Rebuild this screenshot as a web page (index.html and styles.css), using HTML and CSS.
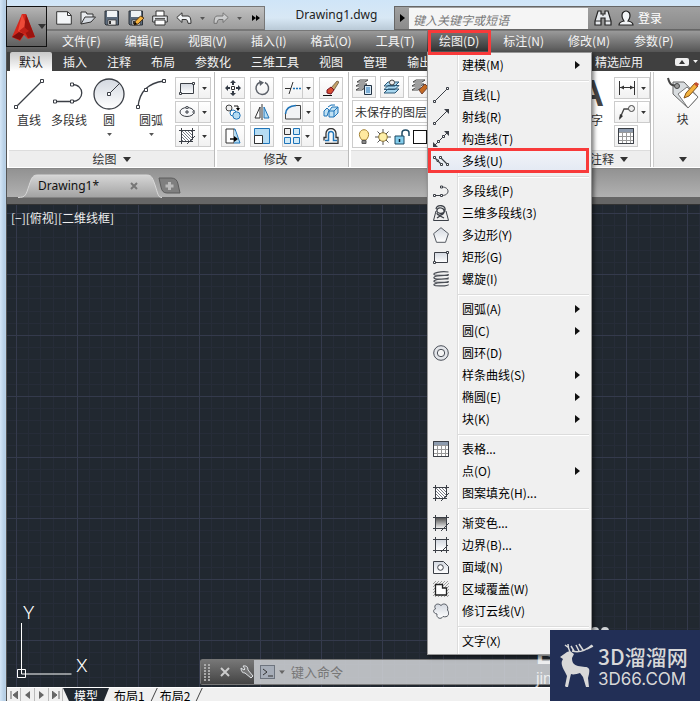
FILE: index.html
```html
<!DOCTYPE html>
<html lang="zh-CN">
<head>
<meta charset="utf-8">
<title>Drawing1.dwg</title>
<link rel="stylesheet" href="styles.css">
</head>
<body>
<svg class="defs" aria-hidden="true">
  <defs>
    <linearGradient id="shade" x1="0" y1="0" x2="0" y2="1"><stop offset="0" stop-color="#d3d8e0"/><stop offset="1" stop-color="#fff"/></linearGradient>
    <linearGradient id="dark" x1="0" y1="0" x2="0" y2="1"><stop offset="0" stop-color="#555"/><stop offset="1" stop-color="#eee"/></linearGradient>
    <pattern id="hatch" width="3" height="3" patternUnits="userSpaceOnUse"><path d="M0 0l3 3" stroke="#555b66" stroke-width=".8"/></pattern>
    <pattern id="hatch2" width="3" height="3" patternUnits="userSpaceOnUse"><path d="M0 3l3-3" stroke="#666" stroke-width=".6"/></pattern>
  </defs>
  <symbol id="i-line" viewBox="0 0 16 16"><path d="M2 14L14 2" stroke="#3b3f46"/><path d="M.5 13.5h2v2h-2zM13.500 .5h2v2h-2z" fill="#fff" stroke="#3b3f46"/></symbol>
  <symbol id="i-ray" viewBox="0 0 16 16"><path d="M2 14L14 2" stroke="#3b3f46"/><path d="M.5 13.500h2v2h-2z" fill="#fff" stroke="#3b3f46"/><path d="M16 0v5l-5-5z" fill="#3b3f46"/></symbol>
  <symbol id="i-xline" viewBox="0 0 16 16"><path d="M2 14L14 2" stroke="#3b3f46"/><path d="M4.500 9.500h2v2h-2zM9.500 4.500h2v2h-2z" fill="#fff" stroke="#3b3f46"/><path d="M16 0v5l-5-5zM0 16v-5l5 5z" fill="#3b3f46"/></symbol>
  <symbol id="i-mline" viewBox="0 0 16 16"><path d="M2 5l7 7M8 5l7 7" stroke="#3b3f46" stroke-width="1.200"/><path d="M.5 3.500h2v2h-2zM6.500 3.500h2v2h-2zM7.500 10.500h2v2h-2zM13.500 10.500h2v2h-2zM4 7h1.500v1.500H4z" fill="#fff" stroke="#3b3f46"/></symbol>
  <symbol id="i-pline" viewBox="0 0 16 16"><path d="M2 12.500h7c8 0 8-8.500 0-8.500" fill="none" stroke="#3b3f46"/><path d="M.5 11.500h2v2h-2zM7.500 11.500h2v2h-2zM7.500 3h2v2h-2z" fill="#fff" stroke="#3b3f46"/></symbol>
  <symbol id="i-3dpoly" viewBox="0 0 16 16"><path d="M3 6L.5 15.500h15L13 6" fill="#eee" stroke="#3b3f46"/><path d="M3 4c1-5 10-4 9 1s-9 4-8 0 8-2 7 2-7 4-7 1M4 13l3-2 4 2" fill="none" stroke="#3b3f46" stroke-width="1.300"/></symbol>
  <symbol id="i-polygon" viewBox="0 0 16 16"><path d="M8 .7l7.400 6-2.900 8.600H3.500L.6 6.700z" fill="url(#shade)" stroke="#555a62"/></symbol>
  <symbol id="i-rect" viewBox="0 0 16 16"><path d="M1.500 3.500h13v10h-13z" fill="url(#shade)" stroke="#3b3f46"/><path d="M.5 12.500h2v2h-2zM13.500 2.500h2v2h-2z" fill="#fff" stroke="#3b3f46"/></symbol>
  <symbol id="i-helix" viewBox="0 0 16 16"><path d="M15.500 1C7 0 0 2 1 3.500s14.500 1 14.500-.5M15.500 4.500C7 4 0 5 1 7s14.500 1 14.500-.5M15.500 8C7 7.500 0 9 1 10.500s14.500 1 14.500-.5M15.500 11.500C7 11 0 12.500 1 14s14.500 1 14.500-.5" fill="none" stroke="#4a4e55" stroke-width="1.200"/></symbol>
  <symbol id="i-donut" viewBox="0 0 16 16"><circle cx="8" cy="8" r="7.300" fill="#e4e6ea" stroke="#4a4f58"/><circle cx="8" cy="8" r="3.700" fill="#f4f4f4" stroke="#4a4f58"/></symbol>
  <symbol id="i-table" viewBox="0 0 16 16"><path d="M.5.5h15v15H.5z" fill="#fff" stroke="#3b3f46"/><path d="M1 1h14v3H1z" fill="#8d9bae"/><path d="M1 4.500h14M1 8.500h14M1 12.500h14M4.500 4v11M8.500 4v11M12.500 4v11" stroke="#999"/><path d="M.5.5h15v15H.5z" fill="none" stroke="#3b3f46"/></symbol>
  <symbol id="i-hatch" viewBox="0 0 16 16"><path d="M3 3h10v10H3z" fill="#fff"/><path d="M3 3h10v10H3z" fill="url(#hatch)"/><path d="M0 2.500h16M0 13.500h14M2.500 0v16M13.500 0v12M8 16l8-8" stroke="#3b3f46" fill="none"/></symbol>
  <symbol id="i-grad" viewBox="0 0 16 16"><path d="M3 3h10v10H3z" fill="url(#dark)"/><path d="M0 2.500h16M0 13.500h14M2.500 0v16M13.500 0v16M8 16l8-8" stroke="#3b3f46" fill="none"/></symbol>
  <symbol id="i-bound" viewBox="0 0 16 16"><path d="M3 3h10v10H3z" fill="url(#shade)"/><path d="M0 2.500h16M0 13.500h16M2.500 0v16M13.500 0v16M8 15l7-7" stroke="#3b3f46" fill="none"/></symbol>
  <symbol id="i-region" viewBox="0 0 16 16"><path d="M.5 2.500h10l5 5v7H.5z" fill="url(#shade)" stroke="#3b3f46"/><circle cx="7.500" cy="8.500" r="2.800" fill="#fff" stroke="#3b3f46"/></symbol>
  <symbol id="i-wipe" viewBox="0 0 16 16"><path d="M0 0h16v16H0z" fill="url(#hatch2)"/><path d="M2.500 3.500h7v3.500h4v7h-11z" fill="#fff" stroke="#222" stroke-width="1.300"/></symbol>
  <symbol id="i-cloud" viewBox="0 0 16 16"><path d="M8 2.500c3-3.500 8-.5 6.500 4.500 3 4 0 8-4.500 6.500-2 3.500-7 1.500-6-2.500C-1 10 .5 6 2.500 6 0 1.500 5-.5 8 2.500z" fill="url(#shade)" stroke="#555a62"/></symbol>
  <symbol id="i-ellipse" viewBox="0 0 16 16"><ellipse cx="8" cy="8" rx="7" ry="4.500" fill="#f7f8fa" stroke="#3b3f46"/><path d="M6 8h4M8 6v4" stroke="#3b3f46"/><path d="M7 2.500h2v2H7zM14 7h2v2h-2z" fill="#fff" stroke="#3b3f46" stroke-width=".8"/></symbol>

  <symbol id="i-move" viewBox="0 0 16 16"><path d="M6.500 6.500h3v3h-3z" fill="#fff" stroke="#333"/><path d="M8 0l3 3H9v2H7V3H5zM8 16l3-3H9v-2H7v2H5zM0 8l3-3v2h2v2H3v2zM16 8l-3-3v2h-2v2h2v2z" fill="#333a44"/></symbol>
  <symbol id="i-rotate" viewBox="0 0 16 16"><path d="M6 2.300A6.300 6.300 0 1 0 11 2.500" fill="none" stroke="#5c6169" stroke-width="1.500"/><path d="M5 0l5 2.500L6 6z" fill="#5c6169"/></symbol>
  <symbol id="i-trim" viewBox="0 0 18 16"><path d="M1 8.500h6" stroke="#333"/><path d="M9 8.500h8" stroke="#1f74b8" stroke-dasharray="2 1" stroke-width="1.300"/><path d="M5 14l4-12" stroke="#333"/></symbol>
  <symbol id="i-erase" viewBox="0 0 16 16"><path d="M8 8l6-7 2 1-5 8z" fill="#c6a36b" stroke="#54452e" stroke-width=".7"/><path d="M4 10l4-3 3 3-3 4-4-1z" fill="#d84e32" stroke="#712"/><path d="M0 15.500h9" stroke="#111"/></symbol>
  <symbol id="i-copy" viewBox="0 0 16 16"><circle cx="4" cy="4" r="3" fill="#eee" stroke="#444"/><circle cx="8" cy="9" r="3" fill="#fff" stroke="#1f74b8"/><circle cx="11.500" cy="11.500" r="3.700" fill="#b7ddf3" stroke="#1f74b8"/><path d="M9 2h4v3" stroke="#111" fill="none"/><path d="M11 4h4l-2 3z"/></symbol>
  <symbol id="i-mirror" viewBox="0 0 16 16"><path d="M6 3v11H1z" fill="#fff" stroke="#333"/><path d="M10 3v11h5z" fill="#b7ddf3" stroke="#1f74b8"/><path d="M8 0v16" stroke="#333"/></symbol>
  <symbol id="i-fillet" viewBox="0 0 18 16"><path d="M2 15V8q1-6 8-6.500h6V15z" fill="#f2f3f5"/><path d="M1.500 15V9M12 1.500h4.500V15H1.500" fill="none" stroke="#444"/><path d="M1.500 10Q2 2 12 1.500" fill="none" stroke="#1f74b8" stroke-width="1.600"/></symbol>
  <symbol id="i-explode" viewBox="0 0 16 16"><path d="M1 7l3-3 2 2-2 6H1zM6 7l3-4h6v6l-4 4H6zM6 7h5v6M11 7l4-4M5 3l3-2h4" fill="#c2e2f4" stroke="#1f74b8"/></symbol>
  <symbol id="i-stretch" viewBox="0 0 16 16"><path d="M1 1h8v14H1z" fill="#fff" stroke="#333"/><path d="M9 1l6 14H9z" fill="#b7ddf3"/><path d="M9 1h1l5 14H9" fill="none" stroke="#1f74b8"/><path d="M5 11h5" stroke="#111" stroke-width="1.500"/><path d="M9 8l4 3-4 3z"/></symbol>
  <symbol id="i-scale" viewBox="0 0 16 16"><path d="M.5.5h15v15H.5z" fill="#b7ddf3" stroke="#1f74b8"/><path d="M.5 7.500h8v8h-8z" fill="#fff" stroke="#333"/></symbol>
  <symbol id="i-array" viewBox="0 0 16 16"><path d="M.5.5h6v6h-6z" fill="#eee" stroke="#333"/><path d="M9.500.5h6v6h-6zM.5 9.500h6v6h-6zM9.500 9.500h6v6h-6z" fill="#d2ebf8" stroke="#1f74b8"/></symbol>
  <symbol id="i-offset" viewBox="0 0 16 16"><path d="M2 12.500h3.500V6a2.500 2.500 0 0 1 5 0v6.500H14" fill="none" stroke="#1f74b8" stroke-width="1.500"/><path d="M2 15.500h13v-6h-2V5.500a5 5 0 0 0-10 0v4H1v3" fill="none" stroke="#333" stroke-width="1.300"/></symbol>
  <symbol id="i-layers" viewBox="0 0 16 16"><path d="M4 1h8l-3 2H1zM3 5h8L8 7H0zM3 9h6l-3 2H0z" fill="#f6f6f6" stroke="#444"/><path d="M8.500 6.500h7v9h-7z" fill="#d8e9f6" stroke="#234"/><path d="M10 9h4M10 11h4M10 13h4" stroke="#1f74b8"/></symbol>
  <symbol id="i-layers2" viewBox="0 0 16 16"><path d="M4 3h11l-4 4H0zM4 6.500h11l-4 4H0zM4 10h11l-4 4H0z" fill="#a8d7f0" stroke="#2c5876"/><circle cx="8" cy="3.500" r="2.500" fill="#eee" stroke="#444"/></symbol>
  <symbol id="i-layers3" viewBox="0 0 16 16"><path d="M4 1h9l-3 2H1zM3 5h9L9 7H0zM3 9h6l-3 2H0z" fill="#f6f6f6" stroke="#444"/><path d="M7 11l6-6 3 3-6 7z" fill="#c56b23" stroke="#743"/></symbol>
  <symbol id="i-bulb" viewBox="0 0 16 16"><path d="M6 11C1 6 4 .7 8 .7s7 5.300 2 10.300z" fill="#ffe9a0" stroke="#a48336"/><path d="M6 11.500h4v3H6z" fill="#888" stroke="#555"/></symbol>
  <symbol id="i-sun" viewBox="0 0 16 16"><path d="M8 0v16M0 8h16M2.500 2.500l11 11M13.500 2.500l-11 11" stroke="#555"/><circle cx="8" cy="8" r="4.300" fill="#fff0a8" stroke="#8c7437"/></symbol>
  <symbol id="i-lock" viewBox="0 0 16 16"><path d="M1 7h9v8H1z" fill="#83cdec" stroke="#1c4963"/><path d="M8 7V4q0-3 3.500-3T15 4v3" fill="none" stroke="#1c4963" stroke-width="1.500"/><path d="M5.500 10v3" stroke="#123" stroke-width="1.500"/></symbol>
  <symbol id="i-dim" viewBox="0 0 18 16"><path d="M1.500 1v14M16.500 1v14M2 7.500h14" stroke="#333"/><path d="M2 7.500l4-2v4zM16 7.500l-4-2v4z" fill="#333"/></symbol>
  <symbol id="i-leader" viewBox="0 0 18 16"><path d="M2 14L6 5h5" fill="none" stroke="#444" stroke-width="1.300"/><path d="M1 16l1-6 3 2z" fill="#333"/><circle cx="13.500" cy="4.500" r="3" fill="#eee" stroke="#444"/></symbol>

  <symbol id="b-line" viewBox="0 0 32 32"><path d="M3 29L29 3" stroke="#3b3f46" stroke-width="1.300"/><path d="M1.500 27.500h3v3h-3zM27.500 1.500h3v3h-3z" fill="#fff" stroke="#3b3f46"/></symbol>
  <symbol id="b-pline" viewBox="0 0 32 32"><path d="M3 23.500h16c13 0 13-17 0-17" fill="none" stroke="#3b3f46" stroke-width="1.300"/><path d="M.5 22h3v3h-3zM17.500 22h3v3h-3zM17.500 5h3v3h-3z" fill="#fff" stroke="#3b3f46"/></symbol>
  <symbol id="b-circle" viewBox="0 0 32 32"><circle cx="16" cy="16" r="15" fill="url(#shade)" stroke="#3b3f46" stroke-width="1.300"/><path d="M16 16L27 5" stroke="#3b3f46"/><path d="M14.500 14.500h3v3h-3z" fill="#fff" stroke="#3b3f46"/></symbol>
  <symbol id="b-arc" viewBox="0 0 32 32"><path d="M3 29Q5 6 29 3" fill="none" stroke="#3b3f46" stroke-width="1.300"/><path d="M1.500 27.500h3v3h-3zM9.500 10.500h3v3h-3zM27.500 1.500h3v3h-3z" fill="#fff" stroke="#3b3f46"/></symbol>
  <symbol id="b-tag" viewBox="0 0 32 32"><path d="M6 5l11 0 14 15-10 11L6 17z" fill="#d9dde0" stroke="#666"/><path d="M11 17l9-7 11 10-10 11z" fill="#fff" stroke="#777"/><path d="M1 1c2 8 5 8 10 7" fill="none" stroke="#444" stroke-width="2"/><circle cx="10" cy="9" r="2.500" fill="#999" stroke="#444"/><path d="M17 21l2-5 9-10 3 3-9 10z" fill="#f4b33e" stroke="#85521b"/><path d="M27 7l2-2 3 2-2 3z" fill="#c24e2e"/></symbol>
  <symbol id="i-bino" viewBox="0 0 18 16"><path d="M4 1h3v3h4V1h3l3 10v4h-6V8H7v7H1v-4z" fill="#e6e9ed" stroke="#222" stroke-width="1.200"/><path d="M1 11h6M11 11h6M8 5h2" stroke="#333"/></symbol>
  <symbol id="i-user" viewBox="0 0 16 16"><path d="M1 15q0-3 5-4Q3 7 4.500 3q3.500-4 7 0Q13 7 10 11q5 1 5 4z" fill="#f2f4f6" stroke="#222" stroke-width="1.200"/></symbol>
  <symbol id="i-new" viewBox="0 0 16 14"><path d="M.7.7h11l3.600 3.500v9H.7z" fill="#f3f5f7" stroke="#333"/><path d="M11.500 1v3.500H15" fill="none" stroke="#333"/></symbol>
  <symbol id="i-open" viewBox="0 0 16 14"><path d="M1 13V1h5l1 2h6v3" fill="#e7eaee" stroke="#333"/><path d="M1 13l4-7h10.500L11 11z" fill="#d6dbe2" stroke="#333"/></symbol>
  <symbol id="i-save" viewBox="0 0 16 16"><path d="M1 1h13.500v14H2L1 14z" fill="#5c6b7c" stroke="#2d3339"/><path d="M3 1h10v6H3z" fill="#f0f3f5"/><path d="M4 10h8v5H4z" fill="#e8e8e8" stroke="#333" stroke-width=".7"/><path d="M5 11h2v3H5z" fill="#333"/></symbol>
  <symbol id="i-pen" viewBox="0 0 16 16"><path d="M6 15l1.500-4 5-5L16 8l-6 6z" fill="#f5b23c" stroke="#553818"/><path d="M6 15l1-3 2 2z"/></symbol>
  <symbol id="i-print" viewBox="0 0 16 16"><path d="M4 6V1h8v5" fill="#fff" stroke="#333"/><path d="M.7 6h14.600v6H.7z" fill="#e6e9ec" stroke="#333"/><path d="M3 10h10v5H3z" fill="#fff" stroke="#333"/><path d="M3 8.500h10" stroke="#555"/></symbol>
  <symbol id="i-undo" viewBox="0 0 16 12"><path d="M.8 5.500L6 .8V4h6q3 0 3 7.300h-3Q12 8 10 7.500H6v3z" fill="#f1f3f5" stroke="#333"/></symbol>
  <symbol id="i-caret" viewBox="0 0 8 5"><path d="M0 0h8L4 5z" fill="currentColor"/></symbol>
</svg>

<div class="window">
  <header class="titlebar">
    <button class="app" aria-label="应用程序菜单">
      <svg width="26" height="28" viewBox="0 0 26 28"><path d="M1 24L11 1h4l9 23-7 2-4-4-4 6z" fill="#d4281d"/><path d="M11 1L7 18l6 3 4-4z" fill="#ee4a38"/><path d="M15 1l9 23-7 1-4-8z" fill="#9c130e"/><path d="M1 24l7-5 5 2-4 6z" fill="#7f0d0b"/><path d="M8 18l5-4 5 4-5 3z" fill="#c01f17"/></svg>
      <svg class="caret" width="8" height="5"><use href="#i-caret"/></svg>
    </button>
    <div class="quick">
      <button aria-label="新建"><svg width="16" height="14"><use href="#i-new"/></svg></button>
      <button aria-label="打开"><svg width="16" height="14"><use href="#i-open"/></svg></button>
      <button aria-label="保存"><svg width="16" height="16"><use href="#i-save"/></svg></button>
      <button aria-label="另存为"><svg width="16" height="16"><use href="#i-save"/><use href="#i-pen"/></svg></button>
      <button aria-label="打印"><svg width="16" height="16"><use href="#i-print"/></svg></button>
      <button aria-label="放弃"><svg width="16" height="12"><use href="#i-undo"/></svg></button>
      <svg class="tiny" width="5" height="3"><use href="#i-caret"/></svg>
      <button class="redo" aria-label="重做"><svg width="16" height="12"><use href="#i-undo"/></svg></button>
      <svg class="tiny" width="5" height="3"><use href="#i-caret"/></svg>
      <button class="more" aria-label="更多"><svg width="8" height="6"><path d="M0 0l4 3-4 3zM4 0l4 3-4 3z"/></svg></button>
    </div>
    <h1 class="doc-name">Drawing1.dwg</h1>
    <div class="info">
      <button class="expand" aria-label="展开"><svg width="5" height="8"><path d="M0 0l5 4-5 4z"/></svg></button>
      <input class="search" type="text" aria-label="搜索" placeholder="键入关键字或短语">
      <button aria-label="查找"><svg width="18" height="16"><use href="#i-bino"/></svg></button>
      <button class="login"><svg width="16" height="16"><use href="#i-user"/></svg>登录</button>
    </div>
  </header>

  <nav class="menubar">
    <button>文件(F)</button><button>编辑(E)</button><button>视图(V)</button><button>插入(I)</button><button>格式(O)</button><button>工具(T)</button>
    <div class="menu-host">
      <button class="open">绘图(D)</button>
      <div class="menu">
        <button><i></i>建模(M)<b></b></button>
        <hr>
        <button><i><svg width="16" height="16"><use href="#i-line"/></svg></i>直线(L)</button>
        <button><i><svg width="16" height="16"><use href="#i-ray"/></svg></i>射线(R)</button>
        <button><i><svg width="16" height="16"><use href="#i-xline"/></svg></i>构造线(T)</button>
        <button class="hot"><i><svg width="16" height="16"><use href="#i-mline"/></svg></i>多线(U)</button>
        <hr>
        <button><i><svg width="16" height="16"><use href="#i-pline"/></svg></i>多段线(P)</button>
        <button><i><svg width="16" height="16"><use href="#i-3dpoly"/></svg></i>三维多段线(3)</button>
        <button><i><svg width="16" height="16"><use href="#i-polygon"/></svg></i>多边形(Y)</button>
        <button><i><svg width="16" height="16"><use href="#i-rect"/></svg></i>矩形(G)</button>
        <button><i><svg width="16" height="16"><use href="#i-helix"/></svg></i>螺旋(I)</button>
        <hr>
        <button><i></i>圆弧(A)<b></b></button>
        <button><i></i>圆(C)<b></b></button>
        <button><i><svg width="16" height="16"><use href="#i-donut"/></svg></i>圆环(D)</button>
        <button><i></i>样条曲线(S)<b></b></button>
        <button><i></i>椭圆(E)<b></b></button>
        <button><i></i>块(K)<b></b></button>
        <hr>
        <button><i><svg width="16" height="16"><use href="#i-table"/></svg></i>表格...</button>
        <button><i></i>点(O)<b></b></button>
        <button><i><svg width="16" height="16"><use href="#i-hatch"/></svg></i>图案填充(H)...</button>
        <hr>
        <button><i><svg width="16" height="16"><use href="#i-grad"/></svg></i>渐变色...</button>
        <button><i><svg width="16" height="16"><use href="#i-bound"/></svg></i>边界(B)...</button>
        <button><i><svg width="16" height="16"><use href="#i-region"/></svg></i>面域(N)</button>
        <button><i><svg width="16" height="16"><use href="#i-wipe"/></svg></i>区域覆盖(W)</button>
        <button><i><svg width="16" height="16"><use href="#i-cloud"/></svg></i>修订云线(V)</button>
        <hr>
        <button><i></i>文字(X)</button>
      </div>
    </div>
    <button>标注(N)</button><button>修改(M)</button><button>参数(P)</button>
  </nav>

  <nav class="tabs">
    <button class="active">默认</button><button>插入</button><button>注释</button><button>布局</button><button>参数化</button><button>三维工具</button><button>视图</button><button>管理</button><button>输出</button>
    <button class="last">精选应用</button>
    <button class="fold" aria-label="最小化功能区"><svg width="14" height="8"><rect width="14" height="8" rx="2" fill="#eee"/><path d="M4 6l3-4 3 4z" fill="#333"/></svg><svg width="5" height="3"><use href="#i-caret"/></svg></button>
  </nav>

  <section class="ribbon">
    <div class="panel">
      <div class="tools">
        <button class="big"><svg width="32" height="32"><use href="#b-line"/></svg>直线</button>
        <button class="big"><svg width="32" height="32"><use href="#b-pline"/></svg>多段线</button>
        <button class="big"><svg width="32" height="32"><use href="#b-circle"/></svg>圆<svg class="tiny" width="5" height="3"><use href="#i-caret"/></svg></button>
        <button class="big arc"><svg width="32" height="32"><use href="#b-arc"/></svg>圆弧<svg class="tiny" width="5" height="3"><use href="#i-caret"/></svg></button>
        <div class="col">
          <button class="split" aria-label="矩形"><svg width="16" height="16"><use href="#i-rect"/></svg><span><svg width="5" height="3"><use href="#i-caret"/></svg></span></button>
          <button class="split" aria-label="椭圆"><svg width="16" height="16"><use href="#i-ellipse"/></svg><span><svg width="5" height="3"><use href="#i-caret"/></svg></span></button>
          <button class="split" aria-label="图案填充"><svg width="16" height="16"><use href="#i-hatch"/></svg><span><svg width="5" height="3"><use href="#i-caret"/></svg></span></button>
        </div>
      </div>
      <h2>绘图<svg width="8" height="5"><use href="#i-caret"/></svg></h2>
    </div>
    <div class="panel modify">
      <div class="tools">
        <div class="grid">
          <button class="sm" aria-label="移动"><svg width="16" height="16"><use href="#i-move"/></svg></button>
          <button class="sm" aria-label="旋转"><svg width="16" height="16"><use href="#i-rotate"/></svg></button>
          <button class="split" aria-label="修剪"><svg width="18" height="16"><use href="#i-trim"/></svg><span><svg width="5" height="3"><use href="#i-caret"/></svg></span></button>
          <button class="sm" aria-label="删除"><svg width="16" height="16"><use href="#i-erase"/></svg></button>
          <button class="sm" aria-label="复制"><svg width="16" height="16"><use href="#i-copy"/></svg></button>
          <button class="sm" aria-label="镜像"><svg width="16" height="16"><use href="#i-mirror"/></svg></button>
          <button class="split" aria-label="圆角"><svg width="18" height="16"><use href="#i-fillet"/></svg><span><svg width="5" height="3"><use href="#i-caret"/></svg></span></button>
          <button class="sm" aria-label="分解"><svg width="16" height="16"><use href="#i-explode"/></svg></button>
          <button class="sm" aria-label="拉伸"><svg width="16" height="16"><use href="#i-stretch"/></svg></button>
          <button class="sm" aria-label="缩放"><svg width="16" height="16"><use href="#i-scale"/></svg></button>
          <button class="split" aria-label="阵列"><svg width="16" height="16"><use href="#i-array"/></svg><span><svg width="5" height="3"><use href="#i-caret"/></svg></span></button>
          <button class="sm" aria-label="偏移"><svg width="16" height="16"><use href="#i-offset"/></svg></button>
        </div>
      </div>
      <h2>修改<svg width="8" height="5"><use href="#i-caret"/></svg></h2>
    </div>
    <div class="panel layers">
      <div class="stack">
        <div class="row">
          <button class="sm" aria-label="图层特性"><svg width="16" height="16"><use href="#i-layers"/></svg></button>
          <button class="sm" aria-label="置为当前"><svg width="16" height="16"><use href="#i-layers2"/></svg></button>
          <button class="sm" aria-label="匹配图层"><svg width="16" height="16"><use href="#i-layers3"/></svg></button>
        </div>
        <select class="state" aria-label="图层状态"><option>未保存的图层状态</option></select>
        <button class="current" aria-label="当前图层"><svg width="16" height="16"><use href="#i-bulb"/></svg><svg width="16" height="16"><use href="#i-sun"/></svg><svg width="16" height="16"><use href="#i-lock"/></svg><span class="swatch"></span></button>
      </div>
      <h2></h2>
    </div>
    <div class="panel notes">
      <div class="tools">
        <button class="big text"><span class="letter">A</span>文字</button>
        <div class="col">
          <button class="split" aria-label="线性"><svg width="18" height="16"><use href="#i-dim"/></svg><span><svg width="5" height="3"><use href="#i-caret"/></svg></span></button>
          <button class="split" aria-label="引线"><svg width="18" height="16"><use href="#i-leader"/></svg><span><svg width="5" height="3"><use href="#i-caret"/></svg></span></button>
          <button class="sm" aria-label="表格"><svg width="16" height="16"><use href="#i-table"/></svg></button>
        </div>
      </div>
      <h2>注释<svg width="8" height="5"><use href="#i-caret"/></svg></h2>
    </div>
    <button class="panel block"><svg width="32" height="32"><use href="#b-tag"/></svg>块<svg class="down" width="8" height="5"><use href="#i-caret"/></svg></button>
  </section>

  <div class="docs">
    <button class="doc">
      <svg class="shape" width="144" height="24" viewBox="0 0 144 24"><defs><linearGradient id="tab" x1="0" y1="0" x2="0" y2="1"><stop offset="0" stop-color="#d6d6d6"/><stop offset="1" stop-color="#a2a2a2"/></linearGradient></defs><path d="M0 23.500c8 0 8-3 11-12S15 1 20 1h108c5 0 6 1 9 10s3 12.500 7 12.500" fill="url(#tab)" stroke="#d9d9d9"/></svg>
      <span>Drawing1*</span>
      <svg class="close" width="8" height="8"><path d="M1 1l6 6M7 1L1 7" stroke="#777" stroke-width="2"/></svg>
    </button>
    <button class="add" aria-label="新图形"><svg width="23" height="17" viewBox="0 0 23 17"><path d="M1 1h12q6 0 7 6l2 9H9q-5 0-6-6z" fill="#7f7f7f" stroke="#5c5c5c"/><path d="M11.500 5v8M7.500 9h8" stroke="#bbb" stroke-width="3"/></svg></button>
  </div>

  <main class="canvas">
    <svg class="mesh" width="100%" height="100%">
      <defs><pattern id="mesh" x="9" y="8" width="61" height="61" patternUnits="userSpaceOnUse"><path d="M12.500 0v61M24.500 0v61M37.500 0v61M49.500 0v61M0 12.500h61M0 24.500h61M0 37.500h61M0 49.500h61" stroke="#262c38"/><path d="M.5 0v61M0 .5h61" stroke="#343a4c"/></pattern></defs>
      <rect width="100%" height="100%" fill="url(#mesh)"/>
    </svg>
    <p class="view">[−][俯视][二维线框]</p>
    <svg class="ucs" width="84" height="84" viewBox="0 0 84 84"><path d="M6.500 23v51h50" fill="none" stroke="#fff"/><path d="M2.500 69.500h8v8h-8z" fill="none" stroke="#fff"/><text x="8" y="19">Y</text><text x="61" y="72">X</text></svg>
    <form class="command">
      <div class="grip">
        <svg width="6" height="17"><path d="M1 0v17M5 0v17" stroke="#aaa" stroke-width="2" stroke-dasharray="2 1"/></svg>
        <button type="button" aria-label="关闭"><svg width="10" height="10"><path d="M1 1l8 8M9 1L1 9" stroke="#ccc" stroke-width="2"/></svg></button>
        <button type="button" aria-label="自定义"><svg width="14" height="14"><path d="M1 3l3 2 1-1-2-3q5-1 5 4l5 6-2 2-6-5Q1 8 1 3z" fill="#777" stroke="#dfe2e5"/></svg></button>
      </div>
      <button type="button" class="prompt" aria-label="最近使用的命令"><svg width="15" height="14"><rect x=".5" y=".5" width="14" height="13" fill="#a6adb8" stroke="#6d747e"/><path d="M3 4l4 3-4 3M8 11h5" fill="none" stroke="#333"/></svg><svg width="6" height="4" viewBox="0 0 8 5"><use href="#i-caret"/></svg></button>
      <input type="text" aria-label="命令" placeholder="键入命令">
    </form>
  </main>

  <footer class="layouts">
    <button class="nav" aria-label="第一个"><svg width="8" height="8"><path d="M1 0v8M8 0L3 4l5 4z" fill="#666" stroke="#666"/></svg></button>
    <button class="nav" aria-label="上一个"><svg width="5" height="8"><path d="M5 0L0 4l5 4z" fill="#666"/></svg></button>
    <button class="nav" aria-label="下一个"><svg width="5" height="8"><path d="M0 0l5 4-5 4z" fill="#666"/></svg></button>
    <button class="nav" aria-label="最后一个"><svg width="8" height="8"><path d="M7 0v8M0 0l5 4-5 4z" fill="#666" stroke="#666"/></svg></button>
    <button class="sheet on">模型</button><button class="sheet">布局1</button><button class="sheet">布局2</button>
  </footer>
</div>

<div class="mark" aria-hidden="true"><span class="bai">B</span><span class="jing">jin</span></div>
<svg class="paw" width="20" height="8" aria-hidden="true"><ellipse cx="5" cy="5" rx="4" ry="4"/><ellipse cx="15" cy="5" rx="4" ry="4"/></svg>
<aside class="brand">
  <svg width="36" height="46" viewBox="0 0 36 46"><path d="M1 14l7-5 3-1 4 3-2 4c0 5 2 7 6 8l7 1c4 0 5 2 4 7l-1 4 1 9h-3l-3-10-3-4c-3 1-7 2-9 1l-1 4-2 9H7l-1-1 2-10-2-4C2 22 2 19 4 16z" fill="#d8d8d8"/><path d="M11 9q-2-4-2-8M10 5L6 2M13 8q10 3 20-6M20 8L17 2M24 7l-4-6M28 6l6-3M15 8l-3-5" fill="none" stroke="#d8d8d8" stroke-width="1.500"/></svg>
  <div><strong>3D溜溜网</strong><em>3D66.COM</em></div>
</aside>
</body>
</html>
```
FILE: styles.css
```css
*, *::before, *::after { box-sizing: border-box; }
body {
  margin: 0;
  height: 100vh;
  overflow: hidden;
  display: flex;
  background: linear-gradient(90deg, #d4e6f7, #b8d0e6 4px, #d4e6f7 100px, #a9bccb 330px, #cfe6fa);
  font: 12px/16px "Noto Sans CJK SC", sans-serif;
  color: #222;
}
button, input, select { font: inherit; color: inherit; border: 0; padding: 0; margin: 0; background: none; border-radius: 0; }
button { white-space: nowrap; }
svg { display: block; flex: none; }
h1, h2, p { margin: 0; font-weight: 400; }
.defs { position: absolute; width: 0; height: 0; }
.window { flex: 1; min-width: 0; margin-left: 6px; border-left: 1px solid #555; display: flex; flex-direction: column; }

.titlebar { height: 30px; padding-top: 6px; display: flex; position: relative; background: linear-gradient(#cfe5f8, #d8e8f5 60%, #b9c9d6); }
.app { position: absolute; z-index: 2; left: -1px; top: 6px; width: 41px; height: 41px; border: 1px solid #111; background: linear-gradient(#b5b5b5, #606060); display: flex; align-items: center; padding-left: 4px; gap: 1px; }
.caret { color: #333; }
.quick { margin-left: 40px; width: 218px; border: 1px solid #777; border-left: 0; background: linear-gradient(#c0c0c0, #9c9c9c); display: flex; align-items: center; gap: 8px; padding-left: 9px; }
.tiny { color: #555; }
.redo { transform: scaleX(-1); opacity: .45; }
.quick .more { margin-left: 2px; }
.doc-name { flex: 1; padding-left: 14px; text-align: center; font: 12px/18px "Noto Sans", sans-serif; color: #222; }
.info { flex: none; width: 306px; display: flex; align-items: center; gap: 6px; background: linear-gradient(#a0a0a0, #8b8b8b); border: 1px solid #666; border-right: 0; color: #fff; }
.expand { width: 14px; align-self: stretch; display: flex; align-items: center; justify-content: center; }
.search { width: 179px; min-width: 0; height: 21px; margin-left: -6px; padding: 2px 4px 0; background: #f5f5f5; }
.search::placeholder { color: #777; font-style: italic; opacity: 1; }
.login { display: flex; align-items: center; gap: 4px; }

.menubar { height: 22px; display: flex; padding-left: 43px; background: linear-gradient(#9a9a9a, #555); border-top: 1px solid #777; color: #f4f4f4; }
.menubar > button, .menu-host > button { padding: 0 12px; height: 20px; }
.menu-host { position: relative; }
.menu-host > .open { background: linear-gradient(#777, #333); }
.menu-host > .open::after { content: ""; position: absolute; z-index: 6; left: 1px; top: -1px; right: 0; height: 25px; border: 3px solid #f83a3a; }
.menu { position: absolute; z-index: 5; left: 0; top: 21px; width: 165px; padding: 1px 2px 2px 0; border: 1px solid #979797; background: linear-gradient(90deg, transparent 29px, #dcdcdc 29px 30px, #fff 30px 31px, transparent 31px) #f0f0f0; box-shadow: 2px 2px 4px rgba(0, 0, 0, .5); color: #000; }
.menu button { display: flex; align-items: center; width: 100%; height: 22px; padding-right: 9px; text-align: left; }
.menu i { width: 34px; padding-left: 5px; flex: none; }
.menu b { margin-left: auto; border: 4px solid transparent; border-left: 5px solid #111; border-right: 0; }
.menu hr { margin: 0 0 0 30px; height: 8px; border: 0; background: linear-gradient(transparent 4px, #dcdcdc 4px 5px, #fff 5px 6px, transparent 6px); }
.menu .hot { position: relative; background: linear-gradient(#f2f4f8, #e3e9f3); }
.hot::after { content: ""; position: absolute; left: 0; right: 0; top: -2px; bottom: -1px; border: 3px solid #f83a3a; }

.tabs { height: 19px; display: flex; gap: 20px; padding-left: 3px; background: #404040; color: #f2f2f2; }
.tabs .active { padding: 0 9px; margin-right: -9px; background: linear-gradient(#c8c8c8, #fff); color: #222; border-radius: 2px 2px 0 0; }
.tabs .last { margin-left: auto; }
.fold { display: flex; align-items: center; gap: 4px; margin: 0 2px 0 12px; }

.ribbon { height: 98px; display: flex; gap: 2px; padding: 1px 0 1px 2px; background: #fff; border-bottom: 1px solid #888; color: #333; overflow: hidden; }
.panel { flex: none; display: flex; flex-direction: column; border-right: 1px solid #bbb; }
.panel h2 { margin-top: auto; height: 17px; font-size: 12px; line-height: 16px; background: #eee; border-top: 1px solid #ddd; display: flex; align-items: center; justify-content: center; gap: 6px; }
.tools { display: flex; padding: 5px 3px 0 0; }
.big { width: 40px; display: flex; flex-direction: column; align-items: center; line-height: 20px; padding-top: 1px; }
.big.arc { width: 44px; }
.big .tiny { margin-top: 3px; }
.col { display: flex; flex-direction: column; gap: 2px; margin-left: 2px; }
.sm, .split { height: 22px; border: 1px solid #ccc; background: linear-gradient(#fff, #f1f1f1); display: flex; align-items: center; justify-content: center; }
.sm { width: 24px; }
.split { width: 36px; justify-content: space-between; padding-left: 3px; }
.split span { width: 12px; align-self: stretch; border-left: 1px solid #ccc; display: flex; align-items: center; justify-content: center; }
.modify .tools { padding: 5px 5px 0 4px; }
.grid { display: grid; grid-template-columns: repeat(4, auto); gap: 2px 5px; }
.modify .split { width: 32px; padding-left: 1px; margin-left: 3px; }
.layers { flex: 1; min-width: 0; overflow: hidden; }
.stack { padding: 4px 0 0 1px; display: flex; flex-direction: column; gap: 2px; }
.row { display: flex; gap: 4px; }
.state { appearance: none; height: 23px; padding: 0 2px; border: 1px solid #ccc; background: #fff; }
.current { height: 23px; border: 1px solid #ccc; display: flex; align-items: center; gap: 3px; padding-left: 3px; }
.swatch { width: 14px; height: 14px; border: 1px solid #111; background: #fff; }
.notes { width: 83px; }
.notes .big.text { width: 46px; }
.notes .col { margin-left: 0; }
.notes .tools { padding-right: 0; }
.letter { font: 700 36px/32px "Liberation Sans", sans-serif; color: #444; }
.block { width: 47px; margin-right: 0; align-items: center; padding: 5px 0 5px 11px; border-left: 1px solid #ccc; border-right: 0; background: linear-gradient(#fff, #ececec); line-height: 20px; }
.block .down { margin-top: auto; }

.docs { height: 35px; padding: 5px 0 0 11px; display: flex; background: linear-gradient(#929292, #b1b1b1); border-bottom: 7px solid #666; }
.doc { position: relative; width: 144px; display: flex; align-items: center; justify-content: space-between; padding: 0 24px 0 20px; font: 12px/20px "Noto Sans", sans-serif; color: #111; }
.shape { position: absolute; left: 0; top: 0; }
.doc span, .close { position: relative; }
.add { margin-left: -4px; align-self: center; }

.canvas { flex: 1; position: relative; min-height: 0; overflow: hidden; background: #212830; border-top: 1px solid #333; }
.mesh { position: absolute; inset: 0; }
.view { position: relative; padding: 5px 4px; color: #eee; }
.ucs { position: absolute; left: 8px; bottom: 3px; fill: #fff; font: 300 19px Roboto, sans-serif; }
.command { position: absolute; left: 193px; right: 0; bottom: 2px; height: 26px; display: flex; align-items: center; background: rgba(215, 217, 220, .84); border: 1px solid #777; border-right: 0; border-radius: 3px 0 0 3px; }
.grip { width: 53px; align-self: stretch; display: flex; align-items: center; gap: 10px; padding-left: 3px; background: linear-gradient(#777, #444); }
.prompt { display: flex; align-items: center; gap: 4px; margin-left: 6px; color: #666; }
.command input { flex: 1; margin-left: 6px; font-size: 13px; }
.command input::placeholder { color: #777; opacity: 1; }

.layouts { height: 14px; display: flex; background: #f0f0f0; border-top: 1px solid #fff; overflow: hidden; color: #000; }
.nav { width: 14px; height: 13px; border-right: 1px solid #bbb; display: flex; align-items: center; justify-content: center; }
.sheet { position: relative; height: 16px; line-height: 14px; padding: 0 7px 0 8px; }
.sheet::after { content: ""; position: absolute; right: -2px; top: 0; height: 16px; width: 1px; background: #444; transform: skewX(-25deg); }
.sheet.on { padding: 0 11px; margin-right: -3px; color: #fff; background: #212830; clip-path: polygon(0 0, 100% 0, 86% 100%, 16% 100%); }

.mark { position: absolute; right: 120px; bottom: 12px; width: 44px; color: rgba(255, 255, 255, .75); display: flex; flex-direction: column; }
.bai { font: 700 28px/28px "Liberation Sans", sans-serif; }
.jing { font: 16px/20px "Liberation Sans", sans-serif; }
.paw { position: absolute; right: 90px; bottom: 67px; fill: #cfd2d5; }
.brand { position: absolute; z-index: 7; right: 0; bottom: 0; width: 150px; height: 71px; padding: 0 9px; display: flex; align-items: center; gap: 3px; background: #222f56; color: #d8d8d8; }
.brand strong { display: block; font: 500 21px/26px "Noto Sans CJK SC", sans-serif; white-space: nowrap; }
.brand em { display: block; font: normal 17px/20px Inter, sans-serif; }
```
